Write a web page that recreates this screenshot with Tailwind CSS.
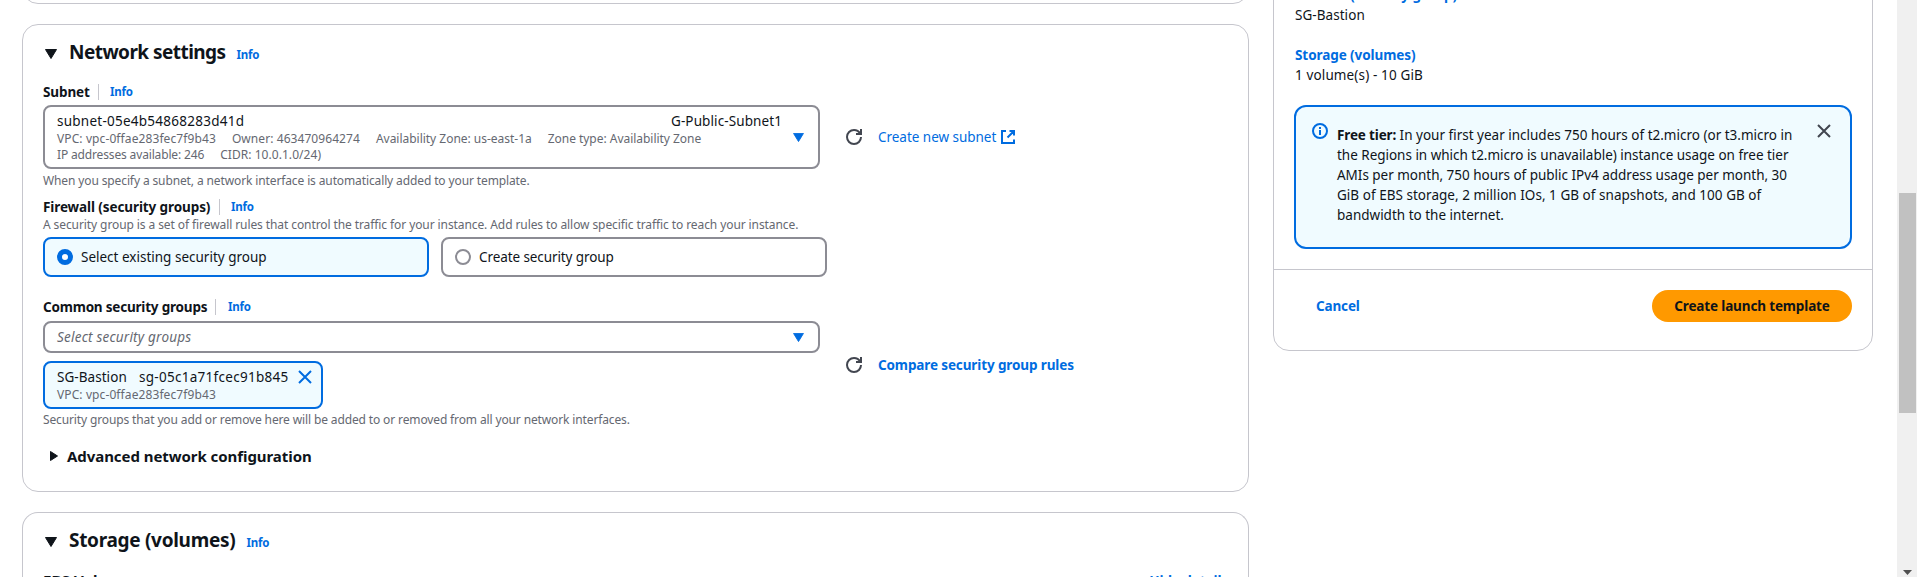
<!DOCTYPE html>
<html lang="en">
<head>
<meta charset="utf-8">
<title>Create launch template</title>
<script src="https://cdn.jsdelivr.net/npm/@tailwindcss/browser@4"></script>
</head>
<body class="flex h-[577px] overflow-hidden bg-white font-['Noto_Sans',sans-serif] text-[13.5px] leading-5 whitespace-nowrap text-[#0f141a]">
<svg class="hidden">
  <symbol id="refresh" viewBox="0 0 16 16"><path d="M15 8a7 7 0 1 1-7-7c2.600 0 4.900 1.400 6.100 3.500M15 0v5h-5" fill="none" stroke="currentColor" stroke-width="2"/></symbol>
  <symbol id="cross" viewBox="0 0 14 14"><path d="M1 1l12 12M13 1L1 13" fill="none" stroke="currentColor" stroke-width="2"/></symbol>
  <symbol id="down" viewBox="0 0 12 10"><path d="M.5.5h11L6 9.500z" fill="currentColor" stroke="currentColor" stroke-linejoin="round"/></symbol>
</svg>
<main class="ml-[22px] h-[577px] w-[1227px] shrink-0 overflow-hidden">
  <section class="h-1 overflow-hidden"><div class="-mt-16 h-[68px] rounded-2xl border border-[#c6c6cd]"></div></section>

  <section class="mt-5 h-[468px] rounded-2xl border border-[#c6c6cd] px-5">
    <div class="mt-[15px] flex h-6 items-baseline leading-6">
      <svg class="mb-px ml-0.5 h-2.5 w-3"><use href="#down"/></svg>
      <h2 class="ml-3 w-[157px] text-[19px] font-bold tracking-[-0.55px]">Network settings</h2>
      <a class="ml-[10.500px] text-[11.500px] font-bold tracking-[-0.2px] text-[#006ce0]">Info</a>
    </div>

    <div class="mt-[18px] flex h-5 items-center font-bold">
      <span class="w-[47px] tracking-[-0.12px]">Subnet</span>
      <span class="ml-2 h-4 w-px bg-[#c6c6cd]"></span>
      <a class="ml-[11px] text-[11.500px] tracking-[-0.2px] text-[#006ce0]">Info</a>
    </div>
    <div class="mt-[3px] flex items-center">
      <div class="flex h-16 w-[777px] items-center justify-between rounded-lg border-2 border-[#8c8c94] pr-[14px] pl-3">
        <div class="w-[725px]">
          <div class="flex justify-between"><span class="tracking-[0.25px]">subnet-05e4b54868283d41d</span><span class="tracking-[0.1px]">G-Public-Subnet1</span></div>
          <div class="flex gap-4 text-xs leading-4 text-[#656871]"><span class="tracking-[0.1px]">VPC: vpc-0ffae283fec7f9b43</span><span class="tracking-[0.07px]">Owner: 463470964274</span><span class="tracking-[-0.02px]">Availability Zone: us-east-1a</span><span class="tracking-[-0.03px]">Zone type: Availability Zone</span></div>
          <div class="flex gap-4 text-xs leading-4 text-[#656871]"><span class="tracking-[-0.15px]">IP addresses available: 246</span><span class="tracking-[0.05px]">CIDR: 10.0.1.0/24)</span></div>
        </div>
        <svg class="h-[9px] w-[11px] text-[#006ce0]"><use href="#down"/></svg>
      </div>
      <svg class="ml-[26px] size-4 text-[#424650]"><use href="#refresh"/></svg>
      <a class="ml-4 flex items-center gap-[5px] text-[#006ce0]"><span class="tracking-[-0.03px]">Create new subnet</span>
        <svg class="size-[14px]" viewBox="0 0 14 14" fill="none" stroke="currentColor" stroke-width="2"><path d="M5 1H1v12h12V9.500M8.500 1H13v4.500M12.500 1.500L6.500 7.500"/></svg></a>
    </div>
    <p class="mt-1 text-xs leading-4 tracking-[-0.12px] text-[#656871]">When you specify a subnet, a network interface is automatically added to your template.</p>

    <div class="mt-2 flex h-5 items-center font-bold">
      <span class="w-[168px] tracking-[-0.1px]">Firewall (security groups)</span>
      <span class="ml-2 h-4 w-px bg-[#c6c6cd]"></span>
      <a class="ml-[11px] text-[11.500px] tracking-[-0.2px] text-[#006ce0]">Info</a>
    </div>
    <p class="text-xs leading-4 tracking-[-0.09px] text-[#656871]">A security group is a set of firewall rules that control the traffic for your instance. Add rules to allow specific traffic to reach your instance.</p>
    <div class="mt-1 flex gap-3">
      <label class="flex h-10 w-[386px] items-center gap-2 rounded-lg border-2 border-[#006ce0] bg-[#f0fbff] pl-3"><span class="size-4 rounded-full border-5 border-[#006ce0] bg-white"></span>Select existing security group</label>
      <label class="flex h-10 w-[386px] items-center gap-2 rounded-lg border-2 border-[#8c8c94] pl-3"><span class="size-4 rounded-full border-2 border-[#8c8c94]"></span><span class="tracking-[-0.09px]">Create security group</span></label>
    </div>

    <div class="mt-5 flex h-5 items-center font-bold">
      <span class="w-[164px] tracking-[-0.2px]">Common security groups</span>
      <span class="ml-2 h-4 w-px bg-[#c6c6cd]"></span>
      <a class="ml-3 text-[11.500px] tracking-[-0.2px] text-[#006ce0]">Info</a>
    </div>
    <div class="mt-1 flex items-center">
      <div class="w-[777px]">
        <div class="flex h-8 items-center justify-between rounded-lg border-2 border-[#8c8c94] pr-[14px] pl-3"><span class="tracking-[0.22px] text-[#656871] italic">Select security groups</span><svg class="h-[9px] w-[11px] text-[#006ce0]"><use href="#down"/></svg></div>
        <div class="mt-2 h-12 w-[280px] rounded-lg border-2 border-[#006ce0] bg-[#f0fbff] pt-1 pl-3">
          <div class="flex items-center"><span class="w-[82px] tracking-[0.05px]">SG-Bastion</span><span class="w-[159px] tracking-[0.28px]">sg-05c1a71fcec91b845</span><svg class="size-[14px] text-[#006ce0]"><use href="#cross"/></svg></div>
          <div class="text-xs leading-4 tracking-[0.1px] text-[#656871]">VPC: vpc-0ffae283fec7f9b43</div>
        </div>
      </div>
      <svg class="ml-[26px] size-4 text-[#424650]"><use href="#refresh"/></svg>
      <a class="ml-4 font-bold tracking-[-0.12px] text-[#006ce0]">Compare security group rules</a>
    </div>
    <p class="mt-[3px] text-xs leading-4 tracking-[-0.13px] text-[#656871]">Security groups that you add or remove here will be added to or removed from all your network interfaces.</p>

    <div class="mt-[18px] flex h-5 items-center">
      <svg class="ml-[7px] h-[10px] w-2" viewBox="0 0 8 10"><path d="M.5.5v9L7.500 5z" fill="currentColor" stroke="currentColor" stroke-linejoin="round"/></svg>
      <h3 class="ml-[9px] text-[15px] font-bold tracking-[-0.06px]">Advanced network configuration</h3>
    </div>
  </section>

  <section class="mt-5 h-[65px] overflow-hidden rounded-t-2xl border border-b-0 border-[#c6c6cd] px-5">
    <div class="mt-[15px] flex h-6 items-baseline leading-6">
      <svg class="mb-px ml-0.5 h-2.5 w-3"><use href="#down"/></svg>
      <h2 class="ml-3 w-[167px] text-[19px] font-bold tracking-[-0.3px]">Storage (volumes)</h2>
      <a class="ml-[10.500px] text-[11.500px] font-bold tracking-[-0.2px] text-[#006ce0]">Info</a>
    </div>
    <div class="mt-[18px] flex items-baseline justify-between font-bold"><h3 class="text-[15px] tracking-[0.1px]">EBS Volumes</h3><a class="tracking-[-0.1px] text-[#006ce0]">Hide details</a></div>
  </section>
</main>

<aside class="ml-6 h-[351px] w-[600px] shrink-0 overflow-hidden">
  <div class="-mt-4 h-[367px] rounded-2xl border border-[#c6c6cd]">
    <div class="h-[285px] border-b border-[#c6c6cd] px-5">
      <div class="h-5 font-bold text-[#006ce0]">Firewall (security group)</div>
      <div class="ml-px tracking-[0.05px]">SG-Bastion</div>
      <div class="mt-5 ml-px font-bold tracking-[-0.08px] text-[#006ce0]">Storage (volumes)</div>
      <div class="ml-px tracking-[0.13px]">1 volume(s) - 10 GiB</div>
      <div class="mt-5 flex h-36 items-start rounded-xl border-2 border-[#006ce0] bg-[#f0fbff] pt-4 pl-4">
        <svg class="size-4 text-[#006ce0]" viewBox="0 0 16 16" fill="none" stroke="currentColor" stroke-width="2"><circle cx="8" cy="8" r="7"/><path d="M8 12V7M8 6V4"/></svg>
        <p class="mt-0.5 ml-[9px] w-[480px]"><b class="tracking-[-0.15px]">Free tier:</b> In your first year includes 750 hours of t2.micro (or t3.micro in<br><span class="tracking-[-0.02px]">the Regions in which t2.micro is unavailable) instance usage on free tier</span><br><span class="tracking-[-0.02px]">AMIs per month, 750 hours of public IPv4 address usage per month, 30</span><br><span class="tracking-[0.03px]">GiB of EBS storage, 2 million IOs, 1 GB of snapshots, and 100 GB of</span><br>bandwidth to the internet.</p>
        <svg class="mt-px size-[14px] text-[#424650]"><use href="#cross"/></svg>
      </div>
    </div>
    <div class="mt-5 flex items-center justify-between pr-5 pl-[42px] font-bold">
      <a class="tracking-[-0.15px] text-[#006ce0]">Cancel</a>
      <button class="h-8 w-[200px] rounded-full bg-[#ff9900] tracking-[-0.14px]">Create launch template</button>
    </div>
  </div>
</aside>

<div class="ml-6 flex w-5 flex-col items-center justify-between bg-[#f0f0f0] pb-0.5">
  <div class="mt-[193px] h-[220px] w-[17px] bg-[#c1c1c1]"></div>
  <svg class="h-[5px] w-[9px]" viewBox="0 0 9 5"><path d="M0 0h9L4.500 5z" fill="#505050"/></svg>
</div>
</body>
</html>
